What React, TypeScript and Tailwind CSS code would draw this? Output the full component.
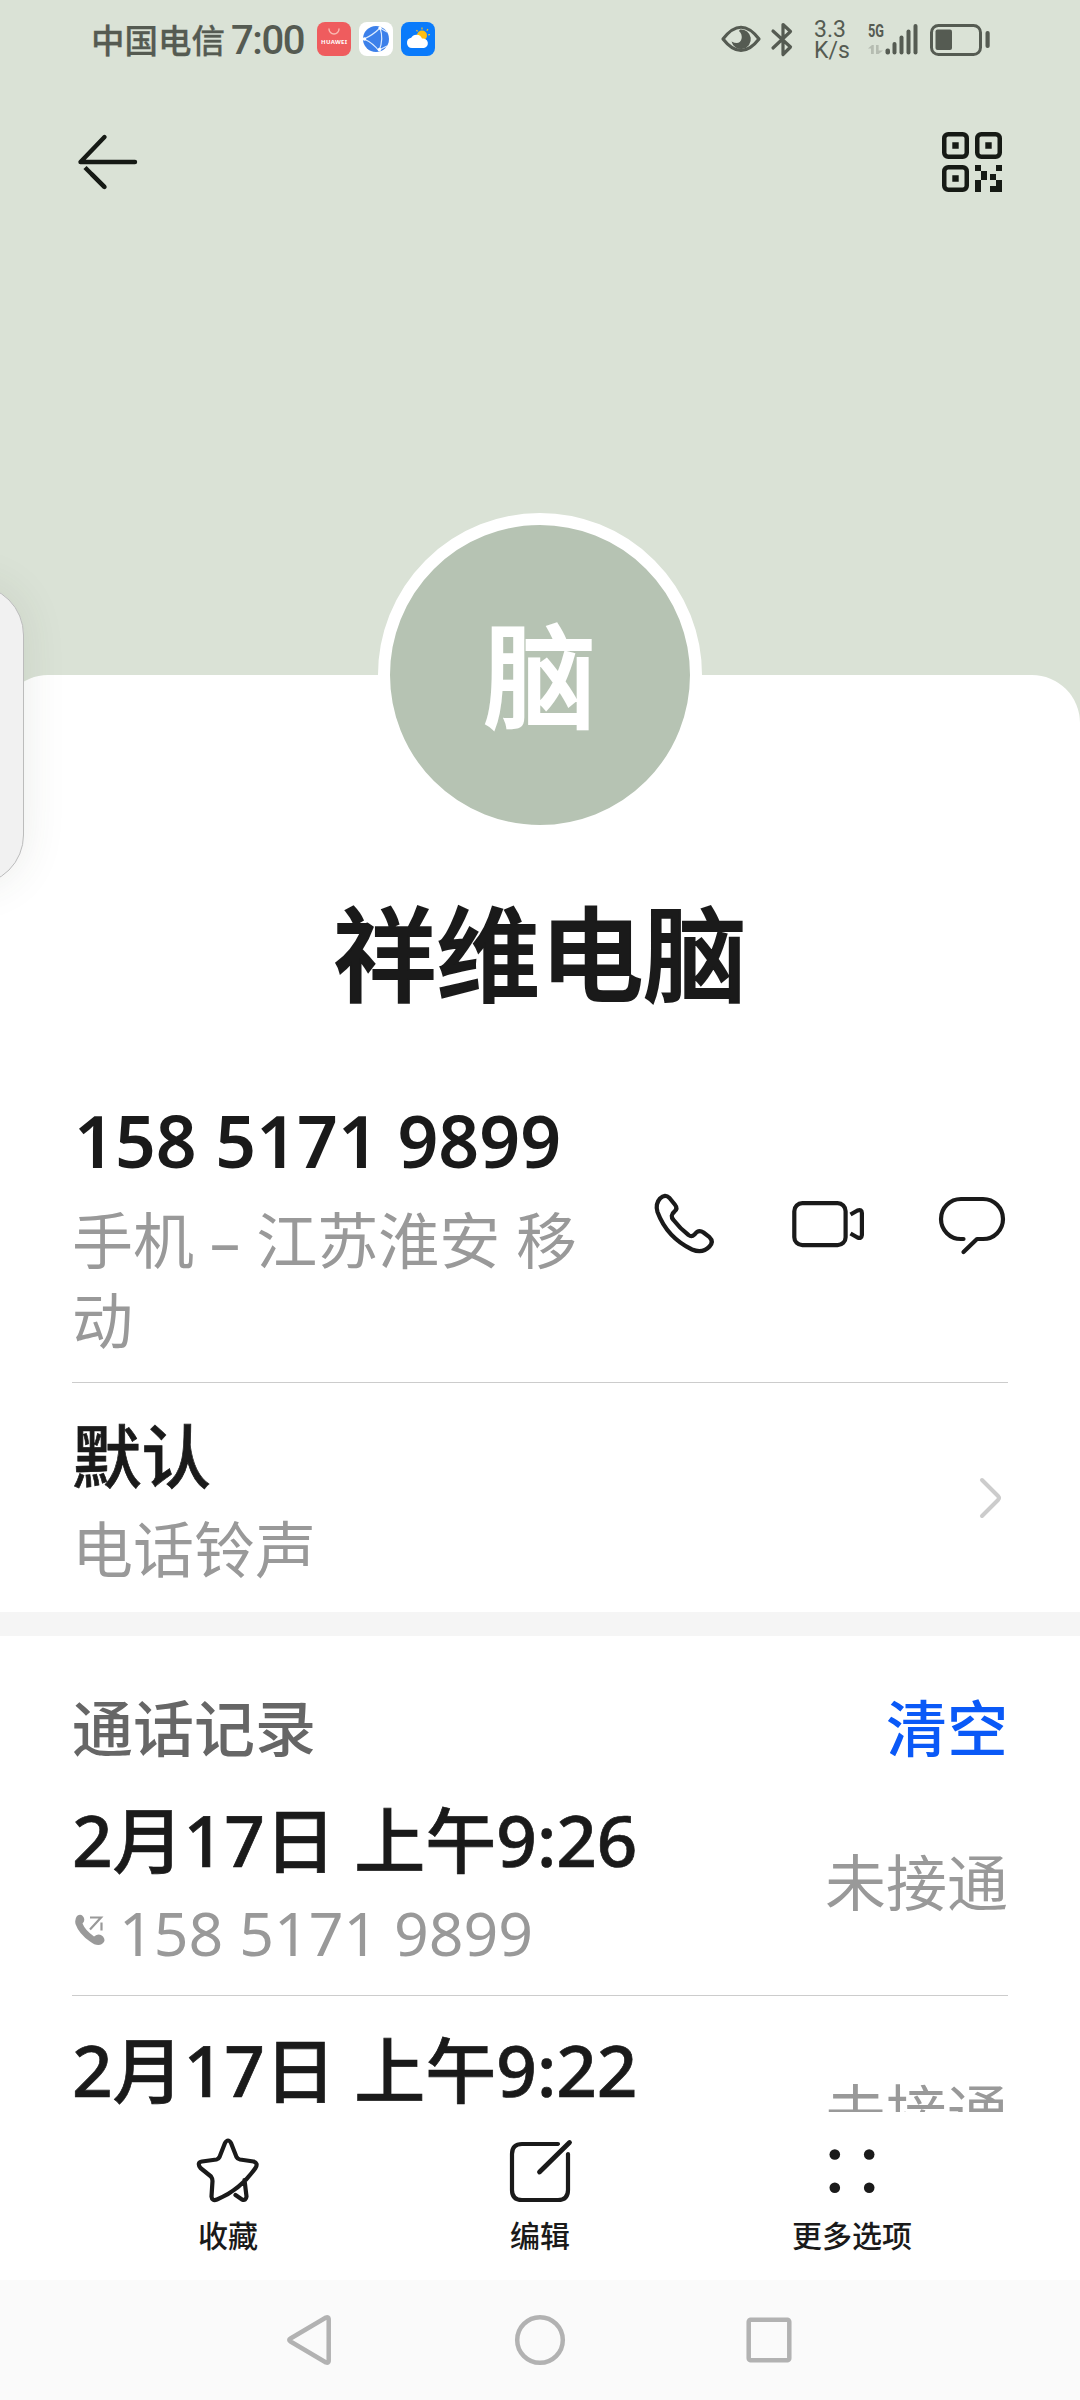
import type { ReactNode } from 'react'

type CallRecord = {
  id: number
  date: string
  number?: string
  status: string
}

const callLog: CallRecord[] = [
  { id: 1, date: '2月17日 上午9:26', number: '158 5171 9899', status: '未接通' },
  { id: 2, date: '2月17日 上午9:22', status: '未接通' },
]

function StatusBar() {
  return (
    <div className="flex h-20 items-start justify-between pl-[91px] pr-[90px] text-[#555b52]">
      <div className="flex h-[78px] items-center">
        <span className="mt-[3px] text-[33.500px] font-medium leading-none [-webkit-text-stroke:0.3px]">中国电信</span>
        <span className="ml-[6px] mt-[4px] w-[79px] font-['Roboto',sans-serif] text-[40px] font-medium leading-none tracking-[-1.4px]">7:00</span>
        <div className="ml-[7px] flex gap-2">
          <svg className="size-[34px]" viewBox="0 0 34 34">
            <rect width="34" height="34" rx="8" fill="#ef5c5e" />
            <path d="M12 7a5 5 0 0 0 10 0" fill="none" stroke="#f9b9b2" strokeWidth="1.4" strokeLinecap="round" />
            <text x="17" y="22" textAnchor="middle" fontSize="6" fontWeight="700" fill="#fff" textLength="26">HUAWEI</text>
          </svg>
          <svg className="size-[34px]" viewBox="0 0 34 34">
            <rect width="34" height="34" rx="8" fill="#fff" />
            <circle cx="17" cy="17" r="13" fill="#3c80ea" />
            <path d="M5 17Q14 13 21 6Q25 17 20 29Q14 21 5 17M21 6l7 4M20 28l8-4" fill="none" stroke="#dcebff" strokeWidth="1.2" />
            <circle cx="5.5" cy="17" r="1.7" fill="#fff" />
            <circle cx="21" cy="6" r="1.7" fill="#fff" />
            <circle cx="20.5" cy="27.5" r="1.7" fill="#fff" />
          </svg>
          <svg className="size-[34px]" viewBox="0 0 34 34">
            <rect width="34" height="34" rx="8" fill="#0a7bfb" />
            <path d="M21 5.500v2M15.500 8l1 1.500M27 7l-1.200 1.700M29 12.500l-1.800.4" stroke="#ffc21a" strokeWidth="1.2" />
            <circle cx="21" cy="13.5" r="5" fill="#ffbf10" />
            <path d="M11 26a5.200 5.200 0 0 1-.8-10.300A6 6 0 0 1 21 16.500a4.800 4.800 0 1 1 2 9.500z" fill="#fff" />
          </svg>
        </div>
      </div>

      <div className="flex h-[78px] items-center">
        <svg className="h-9 w-[76px]" viewBox="0 0 76 36" fill="none" stroke="currentColor">
          <path d="M3 18Q21 -5.500 39 18Q21 41 3 18Z" strokeWidth="3.2" strokeLinejoin="round" />
          <path d="M20 8.500a9.800 9.800 0 1 1-8.500 12q8 4 10-2.500Q22.500 13 19 10Z" fill="currentColor" stroke="none" />
          <path d="M53 10l17.500 16l-7.500 7.500V3.500l7.500 7L53 27" strokeWidth="3.2" strokeLinecap="round" strokeLinejoin="round" />
        </svg>
        <p className="ml-[18px] mt-[1px] w-[54px] font-['Roboto',sans-serif] text-[23px] leading-[21px]">
          3.3
          <br />
          K/s
        </p>
        <svg className="h-9 w-[50px]" viewBox="0 0 50 36" fill="currentColor">
          <text x="0" y="16" fontSize="18" fontWeight="700" fontFamily="Roboto" textLength="16" lengthAdjust="spacingAndGlyphs">5G</text>
          <path d="M0 27.500l4-3.500h1.800v9H3v-5.500zM8 24h2.600v5.500H15L10.500 33H8z" opacity=".28" />
          <rect x="17.5" y="27.5" width="4.5" height="6" rx="2" />
          <rect x="24.5" y="21" width="4" height="12.5" rx="2" />
          <rect x="31.5" y="14.5" width="4" height="19" rx="2" />
          <rect x="38.5" y="8.5" width="4" height="25" rx="2" />
          <rect x="45.5" y="3" width="4" height="30.5" rx="2" />
        </svg>
        <svg className="ml-3 h-9 w-[60px]" viewBox="0 0 60 36" fill="currentColor">
          <rect x="1.5" y="4.5" width="49" height="29" rx="7" fill="none" stroke="currentColor" strokeWidth="3" />
          <rect x="5.5" y="8.5" width="16.5" height="20.5" rx="2" />
          <rect x="55.5" y="10" width="4.2" height="17" rx="2" />
        </svg>
      </div>
    </div>
  )
}

function BackIcon() {
  return (
    <svg className="size-[72px]" viewBox="0 0 72 72" fill="none" stroke="#161a15" strokeWidth="4.4" strokeLinecap="round" strokeLinejoin="round">
      <path d="M63 36H8.500L32.500 11" />
      <path d="M32.500 61L13 41.500" strokeLinecap="butt" />
      <path d="M32.500 61L20 48.500" />
    </svg>
  )
}

function QrIcon() {
  return (
    <svg className="size-[72px]" viewBox="0 0 72 72" fill="#161a15">
      <g fill="none" stroke="#161a15" strokeWidth="4.5">
        <rect x="8.25" y="8.25" width="22.5" height="22.5" rx="4" />
        <rect x="41.25" y="8.25" width="22.5" height="22.5" rx="4" />
        <rect x="8.25" y="41.25" width="22.5" height="22.5" rx="4" />
      </g>
      <path d="M16.300 16.300h6.400v6.400h-6.400zM49.300 16.300h6.400v6.400h-6.400zM16.300 49.300h6.400v6.400h-6.400z" />
      <path d="M39 39h6v6h-6zM60 39h6v6h-6zM45 45h6v9h-6zM54 48h6v6h-6zM39 54h6v12h-6zM60 54h6v12H54v-6h6z" />
    </svg>
  )
}

function ActionIcon({ children }: { children: ReactNode }) {
  return (
    <svg className="size-[72px]" viewBox="0 0 72 72" fill="none" stroke="#1a1a1a" strokeWidth="4.2" strokeLinecap="round" strokeLinejoin="round">
      {children}
    </svg>
  )
}

function CallRow({ record }: { record: CallRecord }) {
  return (
    <div className="mx-[72px] flex h-[230px] shrink-0 items-start justify-between border-b border-[#ccc]">
      <div>
        <div className="mt-[36px] whitespace-nowrap text-[71px] font-medium leading-[76px] text-[#1a1a1a] [-webkit-text-stroke:0.7px]">{record.date}</div>
        {record.number && (
          <div className="mt-[13px] flex items-center text-[60.800px] leading-[84px] text-[#999]">
            <svg className="-mt-[4px] ml-[3px] mr-[10px] size-[34px]" viewBox="0 0 34 34" fill="#999">
              <path d="M2 2Q6 -1 8.500 3Q10.500 6.500 7.500 9.500Q10 16 19 22.500Q24 18.500 28 22.500Q31.500 27 27 30Q22 33 15 27.500Q4 20 .5 10Q-.5 5 2 2Z" />
              <path d="M15 3.500h11L15 15.500M26.500 8.500v8" fill="none" stroke="#999" strokeWidth="2.2" />
            </svg>
            {record.number}
          </div>
        )}
      </div>
      <div className="mt-[73px] text-[61px] leading-[88px] text-[#999]">{record.status}</div>
    </div>
  )
}

function ToolbarItem({ label, children }: { label: string; children: ReactNode }) {
  return (
    <button className="flex flex-1 flex-col items-center">
      <ActionIcon>{children}</ActionIcon>
      <span className="mt-[8px] text-[30px] font-medium leading-[44px] text-[#1a1a1a]">{label}</span>
    </button>
  )
}

function App() {
  return (
    <div className="relative flex h-[2400px] w-[1080px] flex-col overflow-hidden bg-white font-['Noto_Sans','Noto_Sans_CJK_SC',sans-serif]">
      {/* Header */}
      <div className="h-[723px] shrink-0 bg-[#dae2d6]">
        <StatusBar />
        <div className="mt-[46px] flex justify-between px-[72px]">
          <BackIcon />
          <QrIcon />
        </div>
      </div>

      {/* Contact card */}
      <div className="-mt-12 flex h-[1437px] shrink-0 flex-col rounded-t-[48px] bg-white">
        <div className="mx-auto -mt-[162px] flex size-[324px] shrink-0 items-center justify-center rounded-full border-[12px] border-white bg-[#b6c3b3] text-[113px] font-medium leading-none text-white [-webkit-text-stroke:2px]">
          脑
        </div>
        <h1 className="mt-[42px] h-[148px] shrink-0 text-center text-[103.500px] font-medium leading-[150px] text-[#1a1a1a] [-webkit-text-stroke:2px]">祥维电脑</h1>

        <div className="mx-[72px] flex h-[356px] shrink-0 justify-between border-b border-[#ccc] pt-[74px]">
          <div className="w-[540px]">
            <div className="pl-[2px] text-[71.500px] font-semibold leading-[80px] text-[#1a1a1a]">158 5171 9899</div>
            <div className="mt-[20px] text-[61px] leading-[80px] text-[#999]">手机 – 江苏淮安 移动</div>
          </div>
          <div className="flex gap-[72px] pt-[87px]">
            <ActionIcon>
              <path d="M12 10.500Q17 5.500 21.500 10L27 16.800Q30 20.500 26.500 23.500Q21.500 27.500 25.500 32Q32 40.500 40.500 47Q43.500 49.500 46.500 46.500Q50.500 41 55.500 44.500L61.500 49.200Q66 53.500 61.500 58.500Q54.500 66 44 61.500Q19 49.500 9.500 24Q7 16 12 10.500Z" />
            </ActionIcon>
            <ActionIcon>
              <rect x="2.3" y="15.2" width="51.3" height="42" rx="8" />
              <path d="M58.500 26.500L65.500 22.500Q69.800 21 69.900 25V47Q69.500 51 65.500 49.500L58.500 45.500" strokeLinecap="butt" />
            </ActionIcon>
            <ActionIcon>
              <path d="M27.500 51H25A20 20 0 0 1 25 11H47A20 20 0 0 1 47 51H41L27.500 64" />
            </ActionIcon>
          </div>
        </div>

        <div className="mx-[72px] flex h-[229px] shrink-0 items-center justify-between">
          <div className="pt-[13px]">
            <div className="text-[69.500px] font-medium leading-[90px] text-[#1a1a1a] [-webkit-text-stroke:0.7px]">默认</div>
            <div className="mt-[2px] text-[61px] leading-[94px] text-[#999]">电话铃声</div>
          </div>
          <svg className="mr-[5px] h-[42px] w-6" viewBox="0 0 24 42" fill="none" stroke="#ccc" strokeWidth="4" strokeLinecap="round" strokeLinejoin="round">
            <path d="M3 3L19 19Q21 21 19 23L3 39" />
          </svg>
        </div>

        <div className="h-6 shrink-0 bg-[#f5f5f5]" />

        {/* Call history */}
        <div className="flex min-h-0 flex-1 flex-col overflow-hidden">
          <div className="mx-[72px] flex h-[130px] shrink-0 items-end justify-between pb-[1px] text-[61px] font-medium leading-[72px]">
            <h2 className="text-[#666]">通话记录</h2>
            <button className="text-[#0a59f7]">清空</button>
          </div>
          {callLog.map((record) => (
            <CallRow key={record.id} record={record} />
          ))}
        </div>
      </div>

      {/* Bottom toolbar */}
      <div className="flex h-[168px] shrink-0 bg-white px-[72px] pt-[22px]">
        <ToolbarItem label="收藏">
          <path d="M33 9Q36 4 39 9L44.500 23Q45.500 25 48 25.500L61.500 27.500Q66.500 29 63.500 34Q48 56 25 65.500Q20 67.500 19.500 62.500L20.500 47Q20.500 44.500 19 42.500L8.500 34Q4.500 28.500 10 27.500L24.500 25.500Q26.500 25 27.500 23ZM52.500 46L54.500 62.500Q54 67 50 65.500L43.500 61" />
        </ToolbarItem>
        <ToolbarItem label="编辑">
          <path d="M54 10H18Q8 10 8 20V56Q8 66 18 66H54Q64 66 64 56V20" />
          <path d="M65.500 8.500L35.500 38" strokeWidth="10" stroke="#fff" />
          <path d="M65.500 8.500L35.500 38" strokeWidth="4.8" />
        </ToolbarItem>
        <ToolbarItem label="更多选项">
          <g fill="#1a1a1a" stroke="none">
            <circle cx="18.8" cy="20.5" r="5.3" />
            <circle cx="53.2" cy="20.5" r="5.3" />
            <circle cx="18.8" cy="53.7" r="5.3" />
            <circle cx="53.2" cy="53.7" r="5.3" />
          </g>
        </ToolbarItem>
      </div>

      {/* System navigation */}
      <div className="flex h-[120px] shrink-0 items-center justify-center gap-[177px] bg-[#fafafa]">
        <svg className="size-[52px]" viewBox="0 0 52 52" fill="none" stroke="#b2b2b2" strokeWidth="4.5" strokeLinejoin="round">
          <path d="M5.500 24.500L41 3.500Q43.500 2.500 43.700 5V47Q43.500 49.500 41 48.500L5.500 27.500Q3 26 5.500 24.500Z" />
        </svg>
        <svg className="size-[52px]" viewBox="0 0 52 52" fill="none" stroke="#b2b2b2" strokeWidth="4.5">
          <circle cx="26" cy="26" r="22.8" />
        </svg>
        <svg className="size-[52px]" viewBox="0 0 52 52" fill="none" stroke="#b2b2b2" strokeWidth="4.5">
          <rect x="5.7" y="5.7" width="40.6" height="40.6" rx="2" />
        </svg>
      </div>

      {/* Edge dock */}
      <div className="absolute -left-[76px] top-[585px] h-[300px] w-[100px] rounded-[50px] border border-[#bcbcbc] bg-[#f1f1f1] shadow-[0_0_44px_rgba(60,70,50,0.1)]" />
    </div>
  )
}

export default App
